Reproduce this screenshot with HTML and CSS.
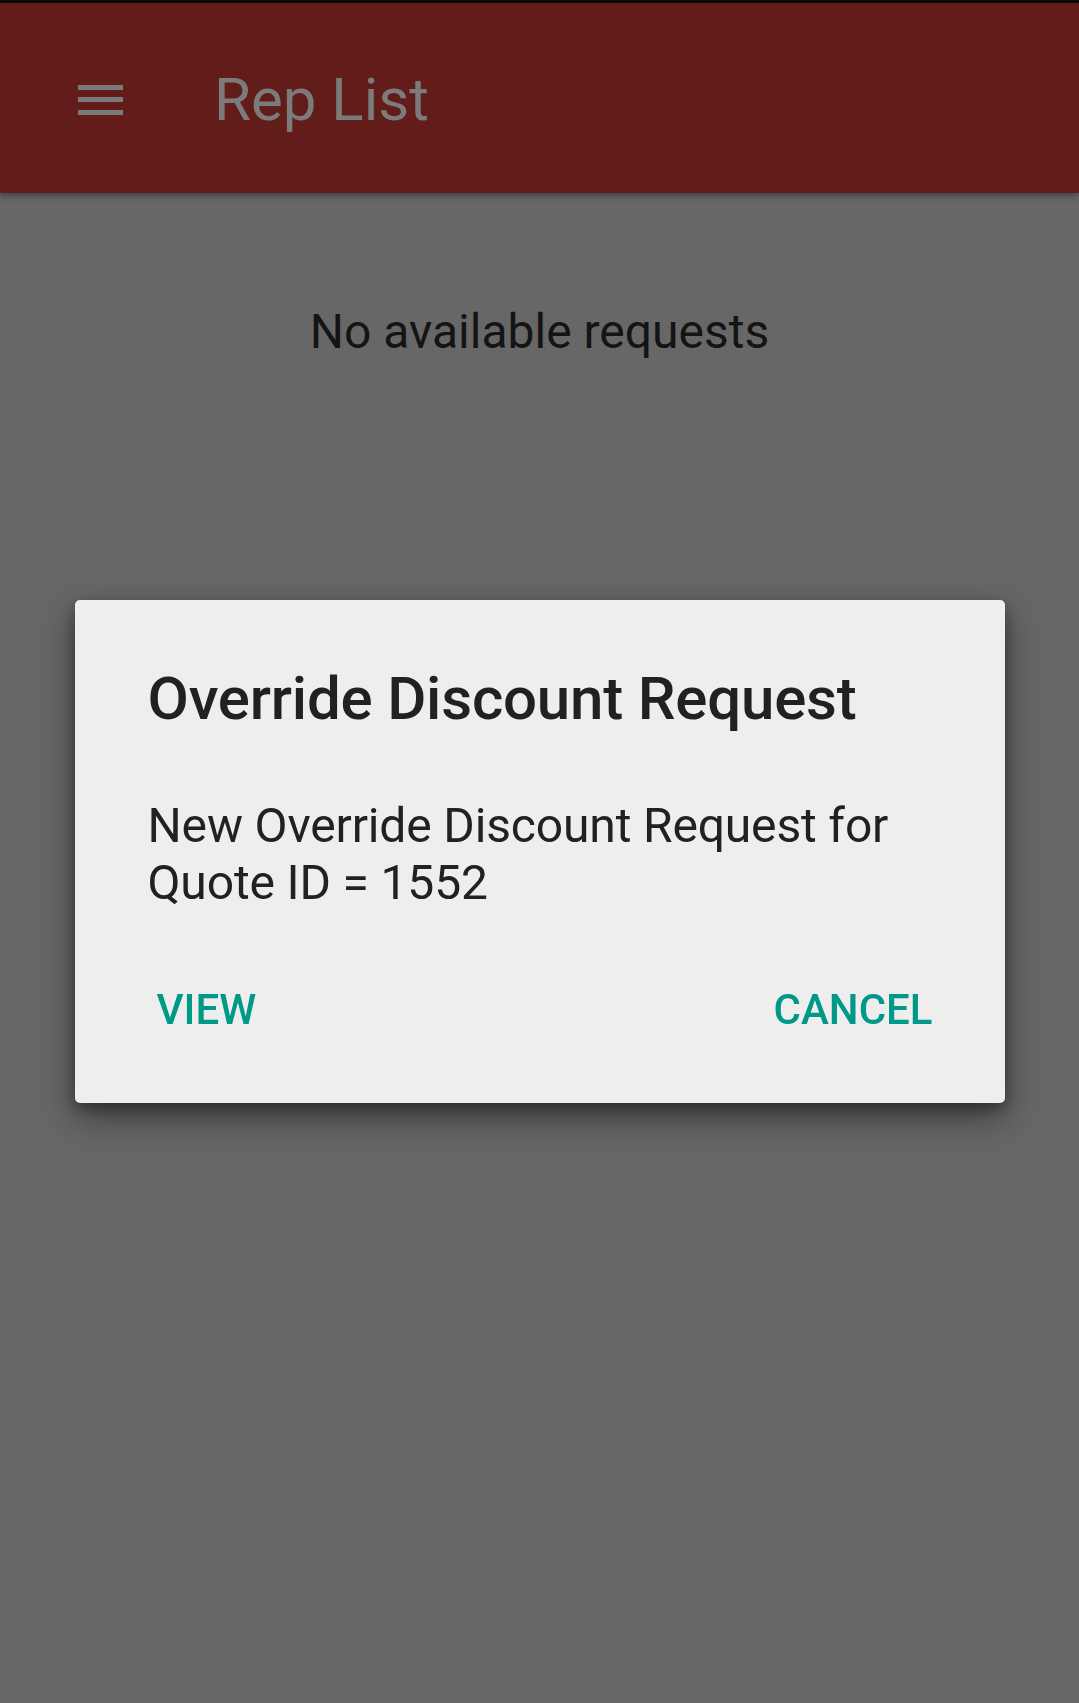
FILE: index.html
```html
<!DOCTYPE html>
<html lang="en">
<head>
<meta charset="utf-8">
<title>Rep List</title>
<link rel="stylesheet" href="styles.css">
</head>
<body>
<header class="appbar">
  <div class="menu-icon" aria-label="Menu">
    <span class="bar"></span>
    <span class="bar"></span>
    <span class="bar"></span>
  </div>
  <h1 class="appbar-title">Rep List</h1>
</header>
<main class="content">
  <p class="empty">No available requests</p>
</main>
<div class="overlay">
  <div class="dialog" role="dialog">
    <h2 class="dialog-title">Override Discount Request</h2>
    <p class="dialog-message">New Override Discount Request for Quote ID = 1552</p>
    <div class="dialog-actions">
      <button class="btn">VIEW</button>
      <button class="btn">CANCEL</button>
    </div>
  </div>
</div>
</body>
</html>
```
FILE: styles.css
```css
html, body {
  margin: 0;
  padding: 0;
}
body {
  width: 1079px;
  height: 1703px;
  background: #676767;
  font-family: Roboto, "Noto Sans", sans-serif;
  overflow: hidden;
}
.appbar {
  box-sizing: border-box;
  height: 193px;
  border-top: 3px solid #0a0a0a;
  background: #621c19;
  display: flex;
  align-items: center;
  padding: 3px 0 0 78px;
  box-shadow: 0 3px 6px rgba(0, 0, 0, 0.35);
  position: relative;
  z-index: 1;
}
.menu-icon {
  width: 45px;
  display: flex;
  flex-direction: column;
  gap: 7.5px;
}
.bar {
  display: block;
  height: 5px;
  background: #7a7a7a;
}
.appbar-title {
  margin: 0 0 0 91px;
  font-size: 60px;
  line-height: 70px;
  font-weight: 400;
  color: #7b7b7b;
}
.content {
  display: flex;
  justify-content: center;
}
.empty {
  margin: 111px 0 0;
  font-size: 48px;
  line-height: 56px;
  color: #141414;
}
.overlay {
  position: fixed;
  inset: 0;
  display: flex;
  align-items: center;
  justify-content: center;
  z-index: 2;
}
.dialog {
  box-sizing: border-box;
  width: 930px;
  height: 503px;
  background: #eeeeee;
  border-radius: 5px;
  padding: 62.5px 72px 0 73px;
  box-shadow: 0 14px 36px rgba(0, 0, 0, 0.45), 0 6px 14px rgba(0, 0, 0, 0.3);
}
.dialog-title {
  margin: 0;
  font-size: 60px;
  line-height: 72px;
  font-weight: 500;
  letter-spacing: -0.2px;
  color: #212121;
}
.dialog-message {
  margin: 62px 0 0;
  font-size: 48px;
  line-height: 57px;
  letter-spacing: -0.15px;
  color: #212121;
}
.dialog-actions {
  margin-top: 75px;
  display: flex;
  justify-content: space-between;
  padding-left: 9px;
}
.btn {
  border: 0;
  background: none;
  padding: 0;
  font-family: inherit;
  font-size: 42px;
  line-height: 48px;
  font-weight: 500;
  color: #009887;
}
```
